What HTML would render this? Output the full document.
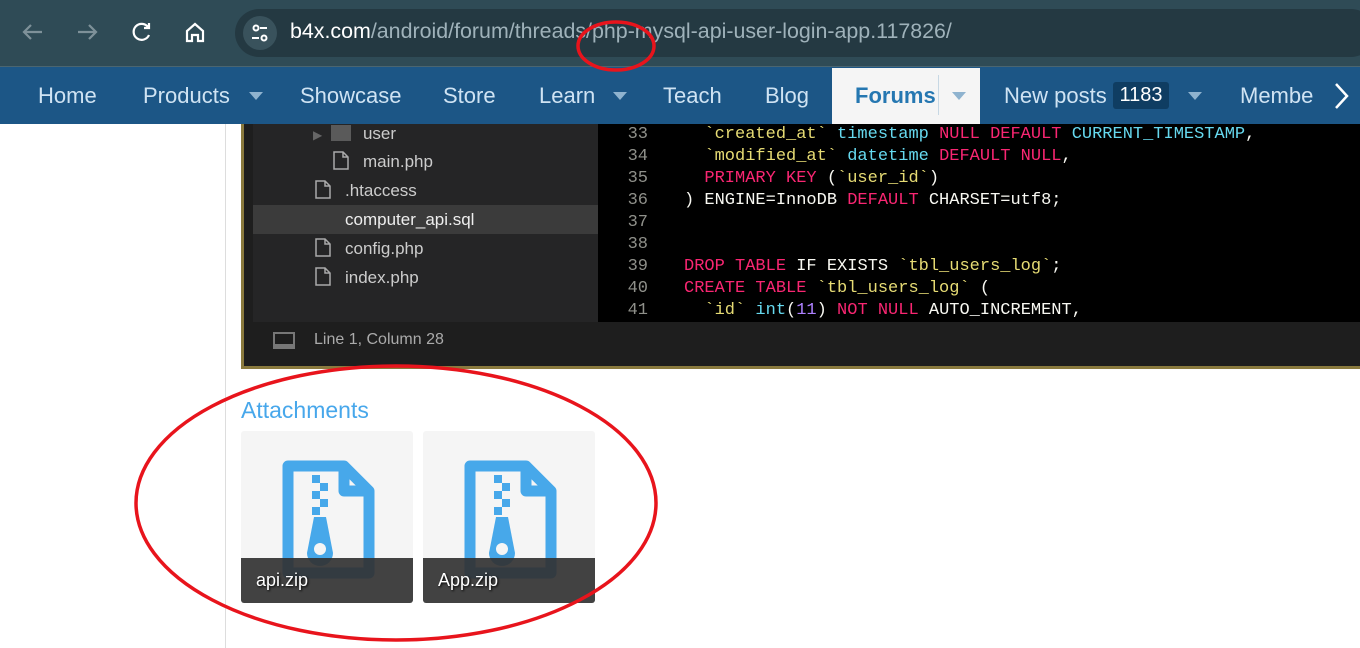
<!DOCTYPE html>
<html><head><meta charset="utf-8"><style>
*{margin:0;padding:0;box-sizing:border-box}
body{width:1360px;height:648px;overflow:hidden;background:#fff;font-family:"Liberation Sans",sans-serif;position:relative}
.top{position:absolute;left:0;top:0;width:1360px;height:67px;background:#2f4b56;border-bottom:1px solid #4a6570}
.pill{position:absolute;left:235px;top:9px;width:1140px;height:48px;border-radius:24px;background:#243942}
.url{position:absolute;left:290px;top:19px;font-size:21.4px;color:#9fb2ba}
.url b{font-weight:normal;color:#fff}
.nav{position:absolute;left:0;top:67px;width:1360px;height:57px;background:#1c5686}
.nav span{position:absolute;top:16px;font-size:22px;color:#cfe3f3}
.tri{position:absolute;top:25px;width:0;height:0;border-left:7px solid transparent;border-right:7px solid transparent;border-top:8px solid #8fb3cf}
.side{position:absolute;left:0;top:124px;width:226px;height:524px;border-right:1px solid #ddd;background:#fff}
.shot{position:absolute;left:241px;top:124px;width:1119px;height:245px;background:#1e1e1e;border:3px solid #8a7a3e;border-top:none;border-right:none}
.tree{position:absolute;left:9px;top:0;width:345px;height:198px;background:#252526;color:#ccc;font-size:17px}
.tree div{position:absolute;height:29px;line-height:29px}
.code{position:absolute;left:354px;top:0;right:0;height:198px;background:#000;font-family:"Liberation Mono",monospace;font-size:17px;color:#f8f8f2}
.code div{position:absolute;left:0;height:22px;line-height:22px;white-space:pre}
.ln{color:#8f908a;display:inline-block;width:50px;text-align:right;margin-right:36px}
.s{color:#e6db74}.t{color:#66d9ef}.k{color:#f92672}.n{color:#ae81ff}
.status{position:absolute;left:9px;top:198px;right:0;height:38px;background:#1e1e1e;color:#aaa;font-size:16px}
.tile{position:absolute;top:431px;width:172px;height:172px;background:#f5f5f5;border-radius:3px;overflow:hidden}
.lab{position:absolute;left:0;bottom:0;width:100%;height:45px;background:rgba(50,50,50,.92);color:#fff;font-size:18px;line-height:45px;padding-left:15px;text-shadow:1px 1px 2px #000}
.fi{display:inline-block;vertical-align:-3px;margin-right:14px}
</style></head><body>
<div class="top">
<svg width="230" height="66" style="position:absolute;left:0;top:0" fill="none" stroke-width="2.2">
<path d="M42 32H24M31 25l-7 7 7 7" stroke="#7e9199"/>
<path d="M78 32h18M89 25l7 7-7 7" stroke="#7e9199"/>
<path d="M148 27a8 8 0 1 0 1 8M149 23v5h-5" stroke="#fff"/>
<path d="M187 41V31l8-7 8 7v10h-5v-6h-6v6z" stroke="#fff"/>
</svg>
<div class="pill"><div style="position:absolute;left:8px;top:7px;width:34px;height:34px;border-radius:17px;background:#39525c"></div>
<svg width="34" height="34" style="position:absolute;left:8px;top:7px" stroke="#fff" stroke-width="2" fill="none"><circle cx="13" cy="12" r="2.5"/><path d="M17 12h7M9 22h7"/><circle cx="21" cy="22" r="2.5"/></svg></div>
<div class="url"><b>b4x.com</b>/android/forum/threads/php-mysql-api-user-login-app.117826/</div>
</div>
<div class="nav">
<span style="left:38px">Home</span>
<span style="left:143px">Products</span><i class="tri" style="left:249px"></i>
<span style="left:300px">Showcase</span>
<span style="left:443px">Store</span>
<span style="left:539px">Learn</span><i class="tri" style="left:613px"></i>
<span style="left:663px">Teach</span>
<span style="left:765px">Blog</span>
<div style="position:absolute;left:832px;top:1px;width:148px;height:56px;background:#f5f5f5"></div>
<span style="left:855px;color:#2577b1;font-weight:bold">Forums</span>
<div style="position:absolute;left:938px;top:8px;width:1px;height:40px;background:#c7d8e4"></div>
<i class="tri" style="left:952px;border-top-color:#8fb3cf"></i>
<span style="left:1004px">New posts</span>
<div style="position:absolute;left:1113px;top:15px;width:56px;height:27px;border-radius:3px;background:#0f3d62;color:#fff;font-size:20px;line-height:27px;text-align:center">1183</div>
<i class="tri" style="left:1188px"></i>
<span style="left:1240px">Membe</span>
<svg width="20" height="30" style="position:absolute;left:1332px;top:14px" stroke="#fff" stroke-width="2.5" fill="none"><path d="M4 3l11 12L4 27"/></svg>
</div>
<div class="side"></div>
<div class="shot">
<div class="tree">
<div style="left:60px;top:-5px"><span style="color:#666;font-size:12px">▶</span> <span style="display:inline-block;width:20px;height:16px;background:#5a5a5a;vertical-align:-2px;margin:0 12px 0 4px"></span>user</div>
<div style="left:80px;top:23px"><svg class="fi" width="16" height="19" fill="none" stroke="#aaa" stroke-width="1.5"><path d="M1 1h9l5 5v12H1zM10 1v5h5"/></svg>main.php</div>
<div style="left:62px;top:52px"><svg class="fi" width="16" height="19" fill="none" stroke="#aaa" stroke-width="1.5"><path d="M1 1h9l5 5v12H1zM10 1v5h5"/></svg>.htaccess</div>
<div style="left:0;top:81px;width:345px;background:#3b3b3b;padding-left:92px;color:#eee">computer_api.sql</div>
<div style="left:62px;top:110px"><svg class="fi" width="16" height="19" fill="none" stroke="#aaa" stroke-width="1.5"><path d="M1 1h9l5 5v12H1zM10 1v5h5"/></svg>config.php</div>
<div style="left:62px;top:139px"><svg class="fi" width="16" height="19" fill="none" stroke="#aaa" stroke-width="1.5"><path d="M1 1h9l5 5v12H1zM10 1v5h5"/></svg>index.php</div>
</div>
<div class="code">
<div style="top:0px"><span class="ln">33</span>  <span class="s">`created_at`</span> <span class="t">timestamp</span> <span class="k">NULL DEFAULT</span> <span class="t">CURRENT_TIMESTAMP</span>,</div>
<div style="top:22px"><span class="ln">34</span>  <span class="s">`modified_at`</span> <span class="t">datetime</span> <span class="k">DEFAULT NULL</span>,</div>
<div style="top:44px"><span class="ln">35</span>  <span class="k">PRIMARY KEY</span> (<span class="s">`user_id`</span>)</div>
<div style="top:66px"><span class="ln">36</span>) ENGINE=InnoDB <span class="k">DEFAULT</span> CHARSET=utf8;</div>
<div style="top:88px"><span class="ln">37</span></div>
<div style="top:110px"><span class="ln">38</span></div>
<div style="top:132px"><span class="ln">39</span><span class="k">DROP TABLE</span> IF EXISTS <span class="s">`tbl_users_log`</span>;</div>
<div style="top:154px"><span class="ln">40</span><span class="k">CREATE TABLE</span> <span class="s">`tbl_users_log`</span> (</div>
<div style="top:176px"><span class="ln">41</span>  <span class="s">`id`</span> <span class="t">int</span>(<span class="n">11</span>) <span class="k">NOT NULL</span> AUTO_INCREMENT,</div>
</div>
<div class="status"><div style="position:absolute;left:20px;top:10px;width:22px;height:17px;border:2px solid #777;border-bottom-width:5px"></div><div style="position:absolute;left:61px;top:9px">Line 1, Column 28</div></div>
</div>
<div style="position:absolute;left:241px;top:397px;font-size:23px;color:#47a7eb">Attachments</div>
<div class="tile" style="left:241px">
<svg width="172" height="172" style="position:absolute;left:0;top:0"><g fill="none" stroke="#47a8ea" stroke-width="11" stroke-linejoin="round"><path d="M47 35h56l25 25v82H47z"/><path d="M103 35v25h25"/></g><g fill="#47a8ea"><rect x="71" y="44" width="8" height="8"/><rect x="79" y="52" width="8" height="8"/><rect x="71" y="60" width="8" height="8"/><rect x="79" y="68" width="8" height="8"/><rect x="71" y="76" width="8" height="8"/><path d="M73 86h12l7 36a13 13 0 1 1-26 0z"/></g><circle cx="79" cy="118" r="6" fill="#f5f5f5"/></svg>
<div class="lab">api.zip</div></div>
<div class="tile" style="left:423px">
<svg width="172" height="172" style="position:absolute;left:0;top:0"><g fill="none" stroke="#47a8ea" stroke-width="11" stroke-linejoin="round"><path d="M47 35h56l25 25v82H47z"/><path d="M103 35v25h25"/></g><g fill="#47a8ea"><rect x="71" y="44" width="8" height="8"/><rect x="79" y="52" width="8" height="8"/><rect x="71" y="60" width="8" height="8"/><rect x="79" y="68" width="8" height="8"/><rect x="71" y="76" width="8" height="8"/><path d="M73 86h12l7 36a13 13 0 1 1-26 0z"/></g><circle cx="79" cy="118" r="6" fill="#f5f5f5"/></svg>
<div class="lab">App.zip</div></div>
<svg width="1360" height="648" style="position:absolute;left:0;top:0;pointer-events:none" fill="none" stroke="#e8141c" stroke-width="3.5">
<ellipse cx="396" cy="503" rx="260" ry="137"/>
<ellipse cx="616" cy="46" rx="38" ry="24"/>
</svg>
</body></html>
